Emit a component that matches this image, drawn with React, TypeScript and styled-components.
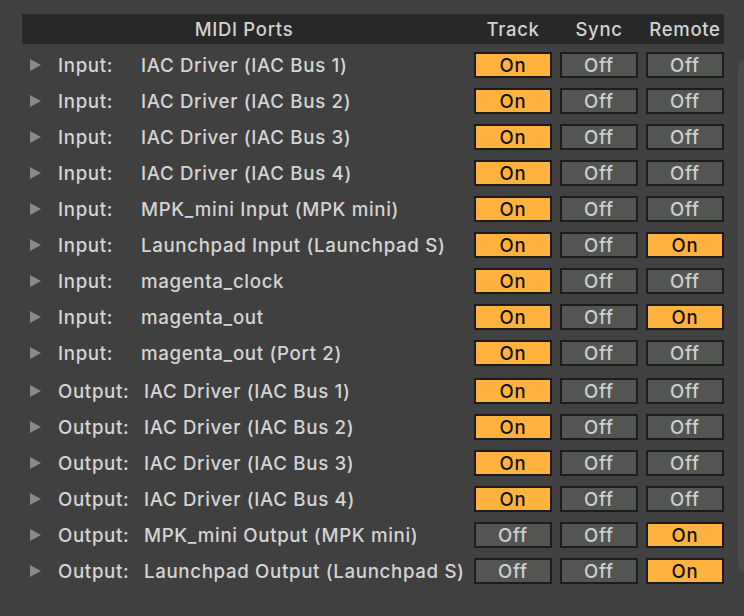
import React from "react";
import styled, { createGlobalStyle } from "styled-components";

const Global = createGlobalStyle`
  html, body { margin: 0; padding: 0; background: #404040; }
  body { font-family: Inter, "Noto Sans", sans-serif; }
`;

const Page = styled.div`
  width: 744px;
  height: 616px;
  background: #404040;
  display: flex;
  overflow: hidden;
`;

const Panel = styled.div`
  margin: 14px 0 0 22px;
  width: 704px;
  display: flex;
  flex-direction: column;
`;

const Header = styled.div`
  height: 30px;
  background: #282828;
  display: grid;
  grid-template-columns: 444px 78px 78px 78px;
  column-gap: 8px;
  align-items: center;
  color: #d2d2d2;
  font-size: 18.5px;
  font-weight: 500;
  letter-spacing: 0.7px;
`;

const HeadCell = styled.div`
  text-align: center;
  white-space: nowrap;
`;

const Rows = styled.div`
  padding-top: 3px;
  display: flex;
  flex-direction: column;
`;

const Group = styled.div<{ $gapTop?: number }>`
  display: flex;
  flex-direction: column;
  margin-top: ${(p) => p.$gapTop ?? 0}px;
`;

const Row = styled.div`
  height: 36px;
  display: grid;
  grid-template-columns: 444px 78px 78px 78px;
  column-gap: 8px;
  align-items: center;
`;

const PortCell = styled.div`
  display: flex;
  align-items: center;
  color: #d4d4d4;
  font-size: 18.7px;
  font-weight: 500;
  letter-spacing: 0.65px;
  white-space: nowrap;
`;

const Arrow = styled.span`
  width: 0;
  height: 0;
  border-top: 6px solid transparent;
  border-bottom: 6px solid transparent;
  border-left: 11px solid #8a8a8a;
  margin-left: 8px;
  margin-right: 17px;
`;

const Kind = styled.span<{ $w: number }>`
  display: inline-block;
  width: ${(p) => p.$w}px;
`;

const Toggle = styled.div<{ $on: boolean }>`
  box-sizing: border-box;
  height: 26px;
  border: 2px solid #1c1c1c;
  background: ${(p) => (p.$on ? "#ffb33e" : "#535553")};
  color: ${(p) => (p.$on ? "#111111" : "#cfcfcf")};
  font-size: 18.5px;
  font-weight: 500;
  letter-spacing: 0.8px;
  display: flex;
  align-items: center;
  justify-content: center;
  line-height: 1;
`;

const Scroll = styled.div`
  margin-top: 60px;
  margin-left: 14px;
  width: 10px;
  height: 512px;
  background: #4a4a4a;
  border-radius: 6px 0 0 6px;
`;

type Port = { name: string; t: boolean; s: boolean; r: boolean };

const inputs: Port[] = [
  { name: "IAC Driver (IAC Bus 1)", t: true, s: false, r: false },
  { name: "IAC Driver (IAC Bus 2)", t: true, s: false, r: false },
  { name: "IAC Driver (IAC Bus 3)", t: true, s: false, r: false },
  { name: "IAC Driver (IAC Bus 4)", t: true, s: false, r: false },
  { name: "MPK_mini Input (MPK mini)", t: true, s: false, r: false },
  { name: "Launchpad Input (Launchpad S)", t: true, s: false, r: true },
  { name: "magenta_clock", t: true, s: false, r: false },
  { name: "magenta_out", t: true, s: false, r: true },
  { name: "magenta_out (Port 2)", t: true, s: false, r: false },
];

const outputs: Port[] = [
  { name: "IAC Driver (IAC Bus 1)", t: true, s: false, r: false },
  { name: "IAC Driver (IAC Bus 2)", t: true, s: false, r: false },
  { name: "IAC Driver (IAC Bus 3)", t: true, s: false, r: false },
  { name: "IAC Driver (IAC Bus 4)", t: true, s: false, r: false },
  { name: "MPK_mini Output (MPK mini)", t: false, s: false, r: true },
  { name: "Launchpad Output (Launchpad S)", t: false, s: false, r: true },
];

const PortRow = ({ kind, w, p }: { kind: string; w: number; p: Port }) => (
  <Row>
    <PortCell>
      <Arrow />
      <Kind $w={w}>{kind}</Kind>
      {p.name}
    </PortCell>
    <Toggle $on={p.t}>{p.t ? "On" : "Off"}</Toggle>
    <Toggle $on={p.s}>{p.s ? "On" : "Off"}</Toggle>
    <Toggle $on={p.r}>{p.r ? "On" : "Off"}</Toggle>
  </Row>
);

export default function App() {
  return (
    <>
      <Global />
      <Page>
        <Panel>
          <Header>
            <HeadCell>MIDI Ports</HeadCell>
            <HeadCell>Track</HeadCell>
            <HeadCell>Sync</HeadCell>
            <HeadCell>Remote</HeadCell>
          </Header>
          <Rows>
            <Group>
              {inputs.map((p, i) => (
                <PortRow key={i} kind="Input:" w={83} p={p} />
              ))}
            </Group>
            <Group $gapTop={2}>
              {outputs.map((p, i) => (
                <PortRow key={i} kind="Output:" w={86} p={p} />
              ))}
            </Group>
          </Rows>
        </Panel>
        <Scroll />
      </Page>
    </>
  );
}
